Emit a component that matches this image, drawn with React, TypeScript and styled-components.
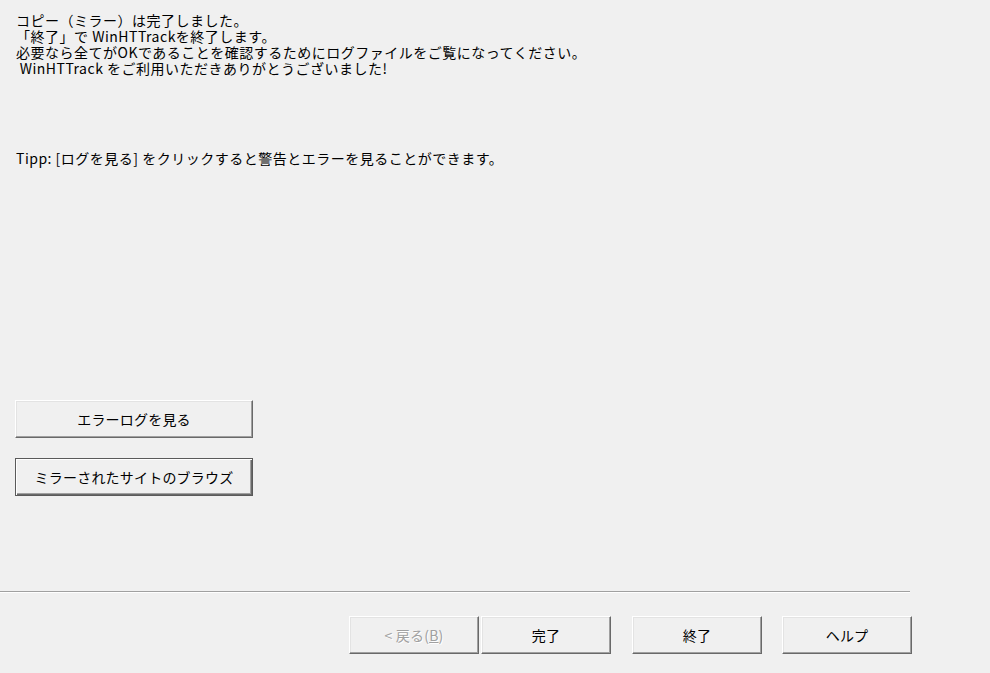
import React from "react";
import styled, { createGlobalStyle } from "styled-components";

const Global = createGlobalStyle`
  html, body {
    margin: 0;
    padding: 0;
    background: #f0f0f0;
  }
  body {
    font-family: "Noto Sans CJK JP", "Noto Sans", sans-serif;
    color: #000;
  }
`;

const Page = styled.div`
  width: 990px;
  height: 673px;
  background: #f0f0f0;
  display: flex;
  flex-direction: column;
  overflow: hidden;
`;

const Message = styled.div`
  padding: 12px 16px 0 16px;
  font-size: 14px;
  line-height: 16px;
  letter-spacing: 0.5px;
`;

const Line = styled.div`
  white-space: pre;
  height: 16px;
`;

const Tip = styled.div`
  margin-top: 74px;
  white-space: pre;
  height: 16px;
`;

const ActionColumn = styled.div`
  display: flex;
  flex-direction: column;
  gap: 20px;
  margin-top: 234px;
  padding-left: 15px;
`;

const WinButton = styled.button<{ $focused?: boolean; $width: number }>`
  box-sizing: border-box;
  width: ${(p) => p.$width}px;
  height: 38px;
  padding: 0;
  margin: 0;
  background: #f0f0f0;
  font-family: "Noto Sans CJK JP", "Noto Sans", sans-serif;
  font-size: 14px;
  letter-spacing: 0.2px;
  color: #000;
  border-style: solid;
  border-width: 1px;
  border-color: ${(p) =>
    p.$focused ? "#5a5a5a" : "#ffffff #696969 #696969 #ffffff"};
  box-shadow: ${(p) =>
    p.$focused
      ? "inset 1px 1px #ffffff, inset -1px -1px #696969, inset -2px -2px #a0a0a0"
      : "inset -1px -1px #a0a0a0, inset 1px 1px #e3e3e3"};
  display: flex;
  align-items: center;
  justify-content: center;
  cursor: default;
  &:disabled {
    color: #a0a0a0;
    text-shadow: 1px 1px 0 #ffffff;
  }
`;

const Separator = styled.div`
  margin-top: 95px;
  width: 910px;
  height: 1px;
  background: #a0a0a0;
  border-bottom: 1px solid #ffffff;
`;

const Footer = styled.div`
  display: flex;
  align-items: flex-start;
  margin-top: 23px;
  padding-left: 349px;
`;

const WizardPair = styled.div`
  display: flex;
  gap: 2px;
  margin-right: 21px;
`;

const FooterGroup = styled.div`
  display: flex;
  gap: 20px;
`;

const Accel = styled.span`
  text-decoration: underline;
`;

export default function App() {
  return (
    <Page>
      <Global />
      <Message>
        <Line>コピー（ミラー）は完了しました。</Line>
        <Line>「終了」で WinHTTrackを終了します。</Line>
        <Line>必要なら全てがOKであることを確認するためにログファイルをご覧になってください。</Line>
        <Line> WinHTTrack をご利用いただきありがとうございました!</Line>
        <Tip>Tipp: [ログを見る] をクリックすると警告とエラーを見ることができます。</Tip>
      </Message>
      <ActionColumn>
        <WinButton $width={238}>エラーログを見る</WinButton>
        <WinButton $width={238} $focused>
          ミラーされたサイトのブラウズ
        </WinButton>
      </ActionColumn>
      <Separator />
      <Footer>
        <WizardPair>
          <WinButton $width={130} disabled>
            &lt; 戻る(<Accel>B</Accel>)
          </WinButton>
          <WinButton $width={130}>完了</WinButton>
        </WizardPair>
        <FooterGroup>
          <WinButton $width={130}>終了</WinButton>
          <WinButton $width={130}>ヘルプ</WinButton>
        </FooterGroup>
      </Footer>
    </Page>
  );
}
